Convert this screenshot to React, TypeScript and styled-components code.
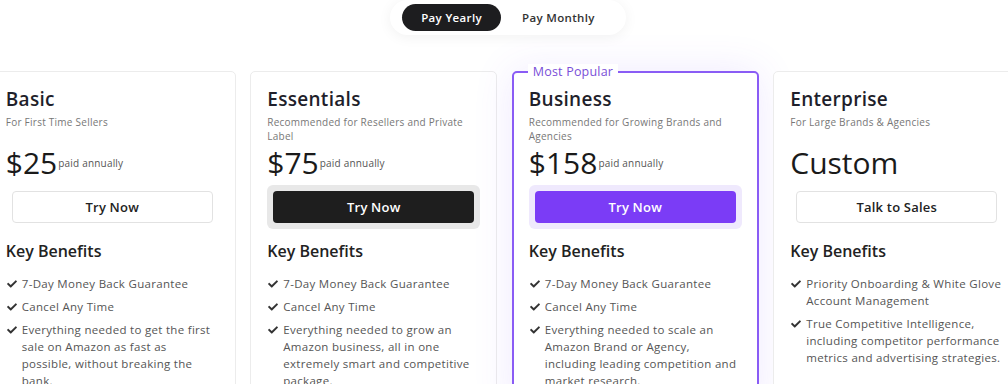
import React from "react";
import styled, { createGlobalStyle, css } from "styled-components";
import { FaCheck } from "react-icons/fa";

const GlobalStyle = createGlobalStyle`
  html, body { margin: 0; padding: 0; background: #ffffff; }
  body {
    font-family: "Open Sans", "Noto Sans", Arial, sans-serif;
    overflow: hidden;
  }
`;

const Page = styled.div`
  width: 1008px;
  height: 384px;
  overflow: hidden;
  display: flex;
  flex-direction: column;
  align-items: center;
  background: #ffffff;
`;

const ToggleBar = styled.div`
  display: flex;
  align-items: center;
  gap: 2px;
  padding: 4px 12px 4px 12px;
  margin-left: 8px;
  background: #ffffff;
  border-radius: 18px;
  box-shadow: 0 2px 14px rgba(0, 0, 0, 0.06);
`;

const ToggleOption = styled.button<{ $active?: boolean }>`
  border: none;
  font-family: inherit;
  font-size: 11.5px;
  letter-spacing: 0.35px;
  font-weight: 600;
  height: 27px;
  padding: 0 19px;
  border-radius: 14px;
  cursor: pointer;
  ${(p) =>
    p.$active
      ? css`
          background: #1d1d1f;
          color: #ffffff;
        `
      : css`
          background: transparent;
          color: #333333;
        `}
`;

const Row = styled.div`
  display: flex;
  gap: 14.5px;
  justify-content: center;
  margin-top: 36px;
  margin-left: 1px;
  width: 1008px;
`;

const Card = styled.div<{ $featured?: boolean }>`
  position: relative;
  flex: 0 0 247px;
  box-sizing: border-box;
  height: 340px;
  border-radius: 5px;
  background: #ffffff;
  ${(p) =>
    p.$featured
      ? css`
          border: 2px solid #8a5cf5;
          padding: 15px 15px;
          box-shadow: 0 0 40px rgba(124, 77, 255, 0.12);
        `
      : css`
          border: 1px solid #ececec;
          padding: 16px 16px;
        `}
`;

const Badge = styled.span`
  position: absolute;
  top: -9px;
  left: 14px;
  padding: 0 5px;
  background: #ffffff;
  color: #7a4fd8;
  font-size: 12.5px;
  letter-spacing: 0.2px;
  line-height: 15px;
  font-weight: 500;
`;

const Title = styled.h2`
  margin: 0;
  font-size: 19px;
  letter-spacing: 0.3px;
  line-height: 23px;
  font-weight: 600;
  color: #1f1f2b;
`;

const Subtitle = styled.p`
  margin: 4px 0 0;
  font-size: 10px;
  letter-spacing: 0.25px;
  line-height: 14px;
  min-height: 28px;
  color: #777777;
`;

const PriceRow = styled.div`
  display: flex;
  align-items: center;
  margin-top: 2px;
  height: 36px;
`;

const Price = styled.span`
  font-size: 30px;
  line-height: 36px;
  font-weight: 500;
  color: #1a1a1a;
  letter-spacing: 0;
`;

const PriceNote = styled.span`
  font-size: 10px;
  letter-spacing: 0.2px;
  color: #555555;
  margin-left: 1px;
`;

const ButtonWell = styled.div<{ $tone: "plain" | "dark" | "purple" }>`
  margin-top: 4px;
  padding: 6px;
  border-radius: 6px;
  background: ${(p) =>
    p.$tone === "dark" ? "#e8e8e8" : p.$tone === "purple" ? "#efe9fd" : "transparent"};
`;

const CtaButton = styled.button<{ $tone: "plain" | "dark" | "purple" }>`
  display: block;
  width: 100%;
  height: 32px;
  border-radius: 4px;
  font-family: inherit;
  font-size: 13px;
  letter-spacing: 0.2px;
  font-weight: 600;
  cursor: pointer;
  ${(p) =>
    p.$tone === "dark"
      ? css`
          background: #1e1e1e;
          color: #ffffff;
          border: none;
        `
      : p.$tone === "purple"
      ? css`
          background: #7b3cf6;
          color: #ffffff;
          border: none;
        `
      : css`
          background: #ffffff;
          color: #222222;
          border: 1px solid #e2e2e2;
        `}
`;

const BenefitsTitle = styled.h3`
  margin: 11px 0 0;
  font-size: 16px;
  line-height: 22px;
  font-weight: 600;
  color: #222222;
`;

const List = styled.ul`
  list-style: none;
  margin: 13px 0 0;
  padding: 0;
  display: flex;
  flex-direction: column;
  gap: 6px;
`;

const Item = styled.li`
  display: flex;
  align-items: flex-start;
  gap: 5px;
  font-size: 11.5px;
  letter-spacing: 0.3px;
  line-height: 17px;
  color: #555555;
`;

const CheckMark = styled.span`
  flex: 0 0 auto;
  display: flex;
  align-items: center;
  height: 17px;
  padding-left: 1px;
  color: #333333;
`;

type Tone = "plain" | "dark" | "purple";

interface Plan {
  name: string;
  subtitle: string;
  price: string;
  note?: string;
  cta: string;
  tone: Tone;
  featured?: boolean;
  benefits: string[];
}

const plans: Plan[] = [
  {
    name: "Basic",
    subtitle: "For First Time Sellers",
    price: "$25",
    note: "paid annually",
    cta: "Try Now",
    tone: "plain",
    benefits: [
      "7-Day Money Back Guarantee",
      "Cancel Any Time",
      "Everything needed to get the first sale on Amazon as fast as possible, without breaking the bank.",
    ],
  },
  {
    name: "Essentials",
    subtitle: "Recommended for Resellers and Private Label",
    price: "$75",
    note: "paid annually",
    cta: "Try Now",
    tone: "dark",
    benefits: [
      "7-Day Money Back Guarantee",
      "Cancel Any Time",
      "Everything needed to grow an Amazon business, all in one extremely smart and competitive package.",
    ],
  },
  {
    name: "Business",
    subtitle: "Recommended for Growing Brands and Agencies",
    price: "$158",
    note: "paid annually",
    cta: "Try Now",
    tone: "purple",
    featured: true,
    benefits: [
      "7-Day Money Back Guarantee",
      "Cancel Any Time",
      "Everything needed to scale an Amazon Brand or Agency, including leading competition and market research.",
    ],
  },
  {
    name: "Enterprise",
    subtitle: "For Large Brands & Agencies",
    price: "Custom",
    cta: "Talk to Sales",
    tone: "plain",
    benefits: [
      "Priority Onboarding & White Glove Account Management",
      "True Competitive Intelligence, including competitor performance metrics and  advertising strategies.",
    ],
  },
];

export default function App() {
  return (
    <>
      <GlobalStyle />
      <Page>
        <ToggleBar>
          <ToggleOption $active>Pay Yearly</ToggleOption>
          <ToggleOption>Pay Monthly</ToggleOption>
        </ToggleBar>
        <Row>
          {plans.map((p) => (
            <Card key={p.name} $featured={p.featured}>
              {p.featured && <Badge>Most Popular</Badge>}
              <Title>{p.name}</Title>
              <Subtitle>{p.subtitle}</Subtitle>
              <PriceRow>
                <Price>{p.price}</Price>
                {p.note && <PriceNote>{p.note}</PriceNote>}
              </PriceRow>
              <ButtonWell $tone={p.tone}>
                <CtaButton $tone={p.tone}>{p.cta}</CtaButton>
              </ButtonWell>
              <BenefitsTitle>Key Benefits</BenefitsTitle>
              <List>
                {p.benefits.map((b) => (
                  <Item key={b}>
                    <CheckMark>
                      <FaCheck size={10} />
                    </CheckMark>
                    <span>{b}</span>
                  </Item>
                ))}
              </List>
            </Card>
          ))}
        </Row>
      </Page>
    </>
  );
}
